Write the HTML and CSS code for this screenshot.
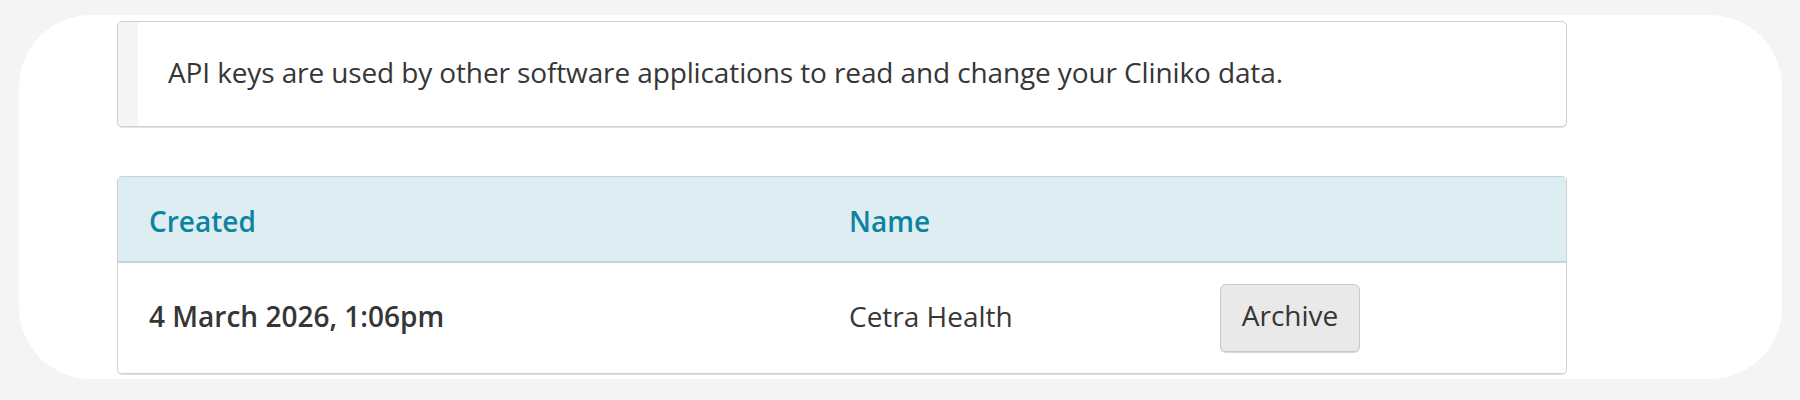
FILE: index.html
```html
<!DOCTYPE html>
<html lang="en">
<head>
<meta charset="utf-8">
<title>API keys</title>
<link rel="stylesheet" href="styles.css">
</head>
<body>
<main class="panel">
  <div class="info">
    <div class="info-strip"></div>
    <p class="info-text">API keys are used by other software applications to read and change your Cliniko data.</p>
  </div>
  <div class="keys">
    <div class="keys-head">
      <div class="cell th">Created</div>
      <div class="cell th">Name</div>
      <div class="cell"></div>
    </div>
    <div class="keys-row">
      <div class="cell date">4 March 2026, 1:06pm</div>
      <div class="cell">Cetra Health</div>
      <div class="cell"><button class="btn" type="button">Archive</button></div>
    </div>
  </div>
</main>
</body>
</html>
```
FILE: styles.css
```css
html, body {
  margin: 0;
  padding: 0;
  background: #f4f4f4;
}
body {
  font-family: "Open Sans", "Noto Sans", sans-serif;
  font-size: 28px;
  color: #363636;
}
.panel {
  margin: 15px 18px 0 19px;
  height: 364px;
  box-sizing: border-box;
  background: #ffffff;
  border-radius: 72px;
  padding: 6px 215px 0 98px;
}
.info {
  display: flex;
  border: 1px solid #d0d0d0;
  border-radius: 5px;
  box-shadow: 0 1px 0 #e2e2e2;
  background: #fff;
  overflow: hidden;
}
.info-strip {
  width: 20px;
  flex: none;
  background: #f5f5f5;
}
.info-text {
  margin: 0;
  padding: 31px 0 35px 30px;
  line-height: 38px;
  letter-spacing: -0.12px;
}
.keys {
  margin-top: 49px;
  border: 1px solid #cfcfcf;
  border-top-color: #b6d9e4;
  border-radius: 5px;
  box-shadow: 0 1px 0 #dedede;
  overflow: hidden;
}
.keys-head, .keys-row {
  display: grid;
  grid-template-columns: 700px 371px 1fr;
  align-items: center;
}
.keys-head {
  background: #deedf2;
  border-bottom: 1px solid #b6d9e4;
  height: 85px;
  box-shadow: 0 -1px 0 #b6d9e4 inset;
}
.keys-row {
  height: 110px;
  background: #fff;
}
.cell {
  padding-left: 31px;
  line-height: 38px;
}
.th {
  color: #0c84a1;
  font-weight: 600;
  padding-top: 2px;
}
.date {
  font-weight: 600;
  margin-top: -4px;
}
.keys-row .cell:nth-child(2) {
  margin-top: -4px;
}
.btn {
  font-family: "Open Sans", "Noto Sans", sans-serif;
  font-size: 28px;
  color: #363636;
  background: #e9e9e9;
  border: 1px solid #c8c8c8;
  border-radius: 6px;
  width: 140px;
  height: 68px;
  padding: 0 0 6px;
  line-height: 38px;
  cursor: pointer;
  box-shadow: 0 1px 0 #d8d8d8;
}
```
